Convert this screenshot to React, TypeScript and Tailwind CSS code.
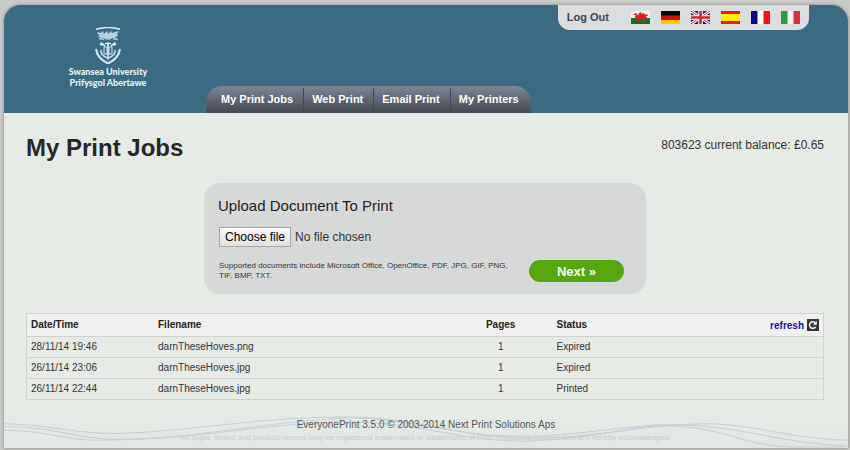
import React from "react";

const tabs = ["My Print Jobs", "Web Print", "Email Print", "My Printers"];

const jobs = [
  { date: "28/11/14 19:46", file: "darnTheseHoves.png", pages: 1, status: "Expired" },
  { date: "26/11/14 23:06", file: "darnTheseHoves.jpg", pages: 1, status: "Expired" },
  { date: "26/11/14 22:44", file: "darnTheseHoves.jpg", pages: 1, status: "Printed" },
];

const flags: { name: string; art: React.ReactNode }[] = [
  {
    name: "Cymraeg",
    art: (
      <>
        <path fill="#f4f4f2" d="M0 0h19v7H0z" />
        <path fill="#12701f" d="M0 7h19v6H0z" />
        <path
          fill="#d8202a"
          d="M2 4l3-2 1 1 1 2 1-3 3-1-1 2 3-1 1 2 2-1 1 2-2 0 1 2 2 2-2 0-2-2-1 1 2 2-3 0-1-2-2 0-1 2-3 0 2-2-1-1-2 2-2 0 3-3 0-2z"
        />
        <path stroke="#d8202a" strokeWidth="2" fill="none" d="M4 5.500l5 0 4 .5M7 8l4-3" />
      </>
    ),
  },
  {
    name: "Deutsch",
    art: (
      <>
        <path d="M0 0h19v5H0z" fill="#080808" />
        <path d="M0 4.500h19v4.500H0z" fill="#d90d0d" />
        <path d="M0 9h19v4H0z" fill="#fdc800" />
      </>
    ),
  },
  {
    name: "English",
    art: (
      <>
        <path d="M0 0h19v13H0z" fill="#1b237c" />
        <path d="M0 0l19 13M19 0L0 13" stroke="#fff" strokeWidth="3" />
        <path d="M0 0l19 13M19 0L0 13" stroke="#d4202c" strokeWidth="1" />
        <path d="M9.500 0v13M0 6.500h19" stroke="#fff" strokeWidth="4.500" />
        <path d="M9.500 0v13M0 6.500h19" stroke="#d4202c" strokeWidth="2.500" />
      </>
    ),
  },
  {
    name: "Español",
    art: (
      <>
        <path d="M0 0h19v13H0z" fill="#ffee00" />
        <path d="M0 0h19v3H0zM0 10h19v3H0z" fill="#f01414" />
      </>
    ),
  },
  {
    name: "Français",
    art: (
      <>
        <path d="M0 0h19v13H0z" fill="#fff" />
        <path d="M0 0h6.500v13H0z" fill="#0a0a88" />
        <path d="M12.500 0H19v13h-6.500z" fill="#f01414" />
      </>
    ),
  },
  {
    name: "Italiano",
    art: (
      <>
        <path d="M0 0h19v13H0z" fill="#f4f4f4" />
        <path d="M0 0h6.500v13H0z" fill="#2f9845" />
        <path d="M12.500 0H19v13h-6.500z" fill="#d8343e" />
      </>
    ),
  },
];

function Crest() {
  return (
    <svg width="26" height="37" viewBox="0 0 26 37" fill="none" stroke="#d5e8f0" aria-hidden="true">
      <path d="M1 2.200C8 .3 18 .3 25 2.200" strokeWidth="1.500" />
      <path
        d="M3 5l3 1 2-2 1 3 3-3 1 3 3-3 1 2 3-1 4-1-2 3 1 2-3 1 2 2-4-1-3 1-2-1-3 1-2-1-4 1 2-2-4 0 3-2-3-1z"
        fill="#b7d1de"
        stroke="none"
      />
      <path d="M4 11.500l5 1M11 12h4M18 12l5 .5" strokeWidth="1.400" opacity=".7" />
      <path d="M1 22c1 7 5 11 12 14.500C20 33 24 29 25 22" strokeWidth="2" />
      <path d="M13 15.500v17" strokeWidth="1.600" />
      <path d="M7 17l3 2M19 17l-3 2M10 16.500h6" strokeWidth="1.700" />
      <path d="M9 20h3v7H9zM14 20h3v7h-3z" strokeWidth="1" />
      <path d="M6 23v2c1 3 3 5 7 6 4-1 6-3 7-6v-2" strokeWidth="1.400" />
      <circle cx="6.500" cy="17" r="1.700" fill="#d5e8f0" stroke="none" />
      <circle cx="19.500" cy="17" r="1.700" fill="#d5e8f0" stroke="none" />
    </svg>
  );
}

function RefreshIcon() {
  return (
    <svg width="12" height="12" viewBox="0 0 12 12" aria-hidden="true">
      <path d="M0 0h12v12H0z" fill="#343434" />
      <path d="M8.600 7.800A3.300 3.300 0 1 1 8.300 3.800" fill="none" stroke="#fff" strokeWidth="1.500" />
      <path d="M9.800 1.800v4H5.800z" fill="#fff" />
    </svg>
  );
}

function Waves() {
  return (
    <svg
      className="absolute inset-0 h-full w-full"
      viewBox="0 0 843 35"
      preserveAspectRatio="none"
      fill="none"
      stroke="#bfd0d4"
      strokeWidth="1"
      aria-hidden="true"
    >
      <path d="M0 10C50 11 70 21 115 20C190 18 250 3 340 3C420 3 450 25 530 25C600 24 640 10 705 10C755 11 780 25 843 27" />
      <path d="M0 13C50 13 65 24 105 26C190 27 250 8 345 4C410 5 450 23 520 23C590 22 620 10 670 11C740 12 770 30 843 33" />
      <path d="M0 17C45 17 60 27 92 27C190 27 240 12 330 8C410 6 450 28 520 28C590 26 620 12 660 12C720 13 740 34 790 34H840" />
    </svg>
  );
}

export default function App() {
  return (
    <div className="bg-[#c9c9c6] pt-[5px] pr-[2px] pb-[2px] pl-1 font-['Liberation_Sans',Arial,sans-serif] text-[#333]">
      <div className="rounded-t-2xl bg-[#e7ebe5] shadow-[0_0_3px_#777]">
        <header className="flex h-[108px] rounded-t-2xl bg-[#3b6b83]">
          <div className="flex w-[202px] flex-col items-center pt-[22px] pl-1.5">
            <Crest />
            <p className="mt-0.5 text-center font-['Lato',sans-serif] text-[9px] leading-[11px] font-black text-[#e8f3f7]">
              Swansea University
              <br />
              Prifysgol Abertawe
            </p>
          </div>
          <nav className="flex h-[27px] items-center self-end rounded-t-2xl bg-linear-to-b from-[#808694] to-[#434854] pr-0.5 pl-[7px] text-[11px] font-bold text-white">
            {tabs.map((tab) => (
              <a
                key={tab}
                href="#"
                className="flex h-6 items-center border-r border-[#414652] pr-[10px] pl-2 whitespace-nowrap last:border-r-0"
              >
                {tab}
              </a>
            ))}
          </nav>
          <div className="mr-[39px] ml-auto flex h-[25px] items-center rounded-b-xl bg-[#dcdddf] px-[9px] text-[11px] font-bold text-[#3c4352]">
            <a href="#" className="mr-[22px] whitespace-nowrap">
              Log Out
            </a>
            <div className="flex gap-[11px]">
              {flags.map((flag) => (
                <a key={flag.name} href="#" aria-label={flag.name}>
                  <svg width="19" height="13" viewBox="0 0 19 13" aria-hidden="true">
                    {flag.art}
                  </svg>
                </a>
              ))}
            </div>
          </div>
        </header>

        <main className="pt-5 pr-6 pl-[22px]">
          <div className="flex items-start justify-between">
            <h1 className="text-[24px] leading-[30px] font-bold text-[#272727]">My Print Jobs</h1>
            <p className="pt-1 text-[12px] leading-4">803623 current balance: £0.65</p>
          </div>

          <form className="mx-auto mt-5 h-[111px] max-w-[442px] rounded-2xl bg-[#d6d9d8] px-[14px] pt-3">
            <h2 className="text-[15px] leading-[22px] text-[#1c1c1c]">Upload Document To Print</h2>
            <label className="mt-[10px] ml-px flex w-fit items-center gap-1 text-[12px]">
              <input type="file" className="sr-only" />
              <span className="border border-[#a5a5a5] bg-linear-to-b from-[#f9f9f9] to-[#e1e1e1] px-[5px] py-px leading-4 text-black">
                Choose file
              </span>
              <span>No file chosen</span>
            </label>
            <div className="mt-[13px] ml-px flex items-center justify-between pr-2">
              <p className="w-[300px] text-[8px] leading-[10px]">
                Supported documents include Microsoft Office, OpenOffice, PDF, JPG, GIF, PNG, TIF, BMP, TXT.
              </p>
              <button
                type="submit"
                className="h-[22px] w-[95px] rounded-full bg-[#56a70e] text-[13px] leading-none font-bold text-white"
              >
                Next »
              </button>
            </div>
          </form>

          <table className="mt-[19px] w-full table-fixed border-collapse border border-[#cfd2ce] text-left text-[10px] leading-[14px]">
            <colgroup>
              <col className="w-[16%]" />
              <col className="w-[37%]" />
              <col className="w-[13%]" />
              <col />
              <col className="w-[12%]" />
            </colgroup>
            <thead>
              <tr className="h-[23px] border-b border-[#cfd2ce] bg-[#f0f0f0] text-[#222]">
                <th className="px-1">Date/Time</th>
                <th className="px-1">Filename</th>
                <th className="px-1 text-center">Pages</th>
                <th className="px-1">Status</th>
                <th className="px-1">
                  <a href="#" className="flex items-end justify-end gap-[3px] leading-[10px] text-[#1010c0]">
                    refresh
                    <RefreshIcon />
                  </a>
                </th>
              </tr>
            </thead>
            <tbody>
              {jobs.map((job) => (
                <tr key={job.date} className="h-[21px] border-b border-[#cfd2ce]">
                  <td className="px-1">{job.date}</td>
                  <td className="px-1">{job.file}</td>
                  <td className="px-1 text-center">{job.pages}</td>
                  <td className="px-1" colSpan={2}>
                    {job.status}
                  </td>
                </tr>
              ))}
            </tbody>
          </table>
        </main>

        <footer className="relative mt-[14px] bg-linear-to-b from-[#e7ebe5] to-[#e1e7e6] pt-1 pb-[4px] text-center">
          <Waves />
          <p className="relative text-[10px] leading-[14px] text-[#555]">
            EveryonePrint 3.5.0 © 2003-2014 Next Print Solutions Aps
          </p>
          <p className="relative text-[8px] leading-3 text-[#c9cecd]">
            All logos, brand and product names may be registered trademarks or trademarks of their respective holders and
            are hereby acknowledged.
          </p>
        </footer>
      </div>
    </div>
  );
}
